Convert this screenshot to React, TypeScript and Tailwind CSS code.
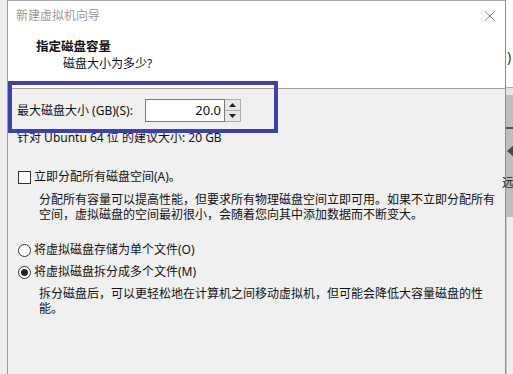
import React from "react";

const font = { fontFamily: '"Noto Sans", "Noto Sans CJK SC", sans-serif' };

function Checkbox() {
  return <span className="block h-[13px] w-[13px] shrink-0 border border-[#333] bg-white" />;
}

function Radio({ checked }: { checked?: boolean }) {
  return (
    <span className="flex h-[13px] w-[13px] shrink-0 items-center justify-center rounded-full border border-[#333] bg-white">
      {checked && <span className="block h-[7px] w-[7px] rounded-full bg-[#222]" />}
    </span>
  );
}

function Spinner() {
  return (
    <div className="flex h-[23px] w-[16px] flex-col border border-l-0 border-[#adadad] bg-[#f4f4f4]">
      <div className="flex flex-1 items-center justify-center border-b border-[#adadad] bg-[#e8e8e8]">
        <svg width="7" height="4" viewBox="0 0 7 4">
          <path d="M0 4 L3.5 0 L7 4 Z" fill="#222" />
        </svg>
      </div>
      <div className="flex flex-1 items-center justify-center bg-[#e8e8e8]">
        <svg width="7" height="4" viewBox="0 0 7 4">
          <path d="M0 0 L3.5 4 L7 0 Z" fill="#222" />
        </svg>
      </div>
    </div>
  );
}

export default function App() {
  return (
    <div className="relative flex h-[374px] w-[513px] overflow-hidden bg-[#f0f0f0] text-[#111]" style={font}>
      {/* window behind, left edge */}
      <div className="w-[8px] shrink-0 border-r border-[#9c9c9c] bg-[#eeeeee]" />

      {/* dialog */}
      <div className="flex w-[497px] shrink-0 flex-col border-t border-[#a8a8a8]">
        <div className="h-[88px] shrink-0 border-b border-[#a0a0a0] bg-white">
          <div className="flex h-[30px] items-center justify-between pl-[8px] pr-[9px]">
            <span className="text-[12px] leading-none text-[#9a9a9a]">新建虚拟机向导</span>
            <svg width="12" height="12" viewBox="0 0 12 12">
              <path d="M1 1 L11 11 M11 1 L1 11" stroke="#8a8a8a" strokeWidth="1" />
            </svg>
          </div>
          <div className="pl-[28px] pt-[9px] text-[12.5px] font-bold leading-[14px]">指定磁盘容量</div>
          <div className="pl-[55px] pt-[3px] text-[12px] leading-[14px]">磁盘大小为多少?</div>
        </div>

        <div className="flex flex-1 flex-col pl-[9px] text-[12px]">
          <div className="mt-[10px] flex items-center">
            <span className="w-[128px] leading-[14px]">最大磁盘大小 (GB)(S):</span>
            <div className="flex h-[23px] w-[80px] items-center justify-end border border-[#7a7a7a] bg-white pr-[3px] text-[13px]">
              20.0
            </div>
            <Spinner />
          </div>
          <div className="mt-[9px] leading-[14px]">针对 Ubuntu 64 位 的建议大小: 20 GB</div>

          <div className="mt-[25px] flex items-center gap-[3px] pl-[1px] leading-[14px]">
            <Checkbox />
            <span>立即分配所有磁盘空间(A)。</span>
          </div>
          <div className="mt-[8px] whitespace-nowrap pl-[22px] leading-[15px]">
            <div>分配所有容量可以提高性能，但要求所有物理磁盘空间立即可用。如果不立即分配所有</div>
            <div>空间，虚拟磁盘的空间最初很小，会随着您向其中添加数据而不断变大。</div>
          </div>

          <div className="mt-[21px] flex items-center gap-[3px] pl-[1px] leading-[14px]">
            <Radio />
            <span>将虚拟磁盘存储为单个文件(O)</span>
          </div>
          <div className="mt-[8px] flex items-center gap-[3px] pl-[1px] leading-[14px]">
            <Radio checked />
            <span>将虚拟磁盘拆分成多个文件(M)</span>
          </div>
          <div className="mt-[7px] whitespace-nowrap pl-[22px] leading-[15px]">
            <div>拆分磁盘后，可以更轻松地在计算机之间移动虚拟机，但可能会降低大容量磁盘的性</div>
            <div>能。</div>
          </div>
        </div>
      </div>

      {/* window behind, right edge */}
      <div className="flex w-[8px] shrink-0 flex-col border-l border-[#8e8e8e]">
        <div className="relative h-[88px] border-b border-[#b0b0b0] bg-white">
          <span className="absolute left-[1px] top-[50px] text-[14px] leading-none text-[#333]">)</span>
        </div>
        <div className="h-[7px] bg-[#e4e4e4]" />
        <div className="relative h-[122px] bg-[#bdbdbd]">
          <span className="absolute left-0 top-[32px] block h-[2px] w-[8px] bg-[#555]" />
          <svg className="absolute left-[1px] top-[50px]" width="7" height="12" viewBox="0 0 7 12">
            <path d="M7 0 L0 6 L7 12 Z" fill="#3c4a5c" />
          </svg>
          <span className="absolute -left-[4px] top-[82px] text-[12px] leading-none text-[#222]">远</span>
        </div>
        <div className="flex-1 border-l border-[#c8c8c8] bg-[#efefef]" />
      </div>

      {/* annotation box */}
      <div className="pointer-events-none absolute left-[8px] top-[81px] h-[52px] w-[270px] border-[4px] border-[#3b41ad]" />
    </div>
  );
}
